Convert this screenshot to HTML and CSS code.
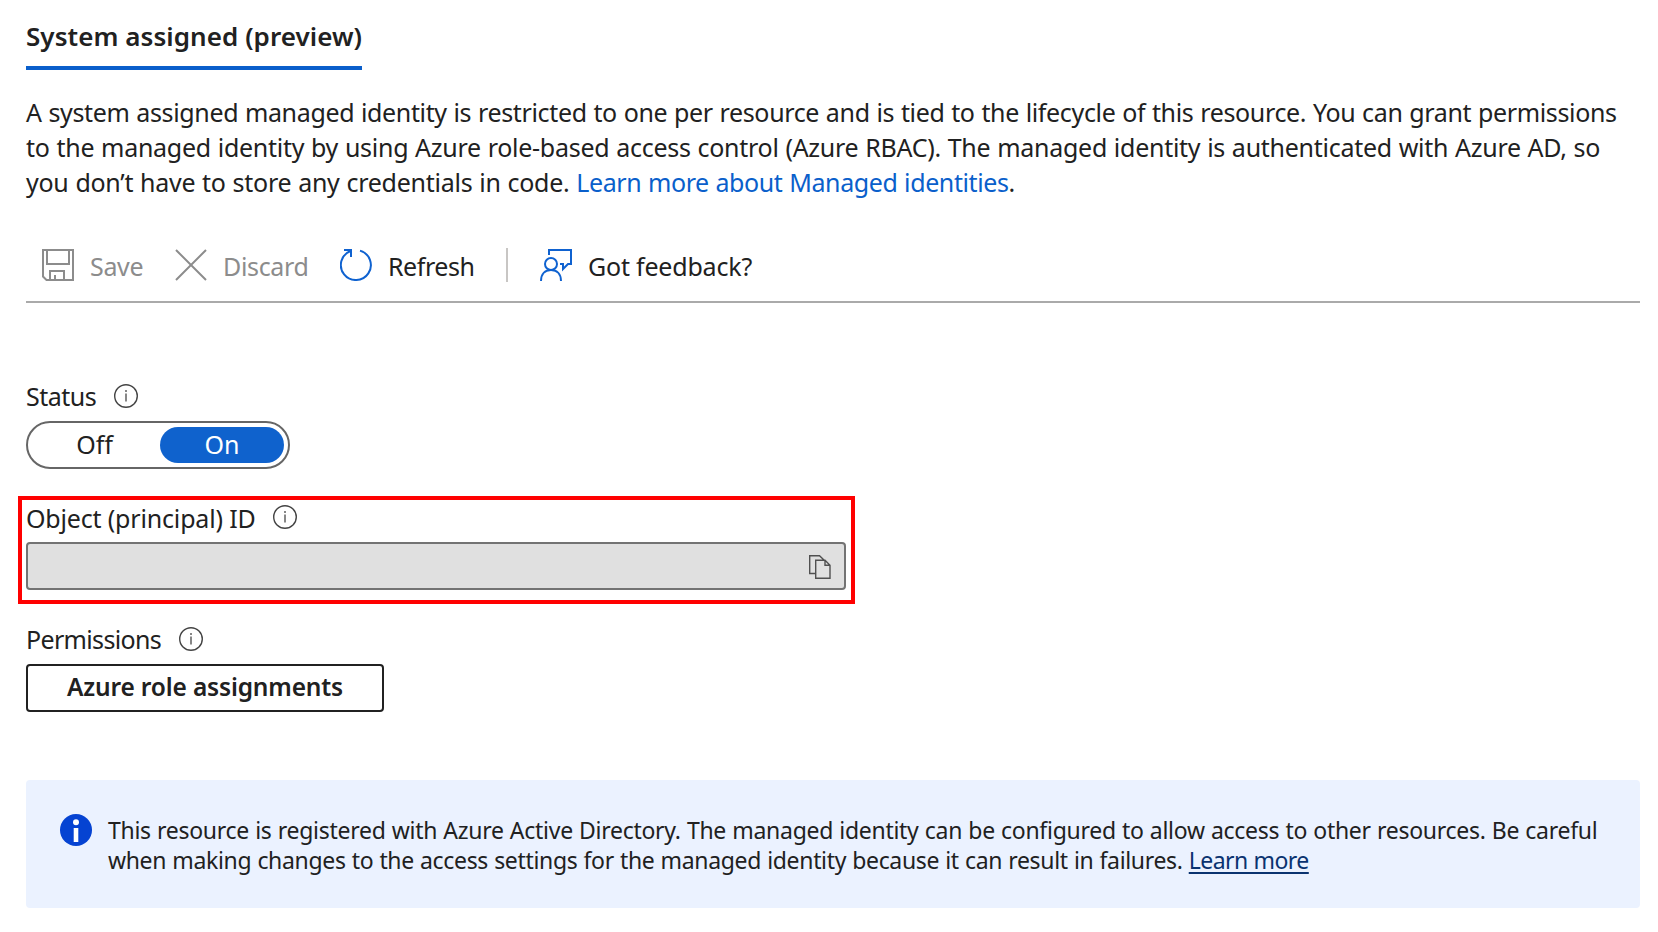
FILE: index.html
```html
<!DOCTYPE html>
<html lang="en">
<head>
<meta charset="utf-8">
<title>Identity</title>
<link rel="stylesheet" href="styles.css">
</head>
<body>
<main class="page">
  <h1 class="tab">System assigned (preview)</h1>
  <p class="intro">
    <span class="line l1">A system assigned managed identity is restricted to one per resource and is tied to the lifecycle of this resource. You can grant permissions</span>
    <span class="line l2">to the managed identity by using Azure role-based access control (Azure RBAC). The managed identity is authenticated with Azure AD, so</span>
    <span class="line l3">you don’t have to store any credentials in code. <a class="link" href="#">Learn more about Managed identities</a>.</span>
  </p>
  <div class="toolbar">
    <button class="tool save disabled">
      <svg width="32" height="32" viewBox="0 0 32 32" fill="none" stroke="#8c8c8c" stroke-width="2"><path d="M1 1H31V31H4.500L1 27.500ZM5 1V15H27V1M8 31V22H22V31M13 31V26"/></svg>
      <span>Save</span>
    </button>
    <button class="tool discard disabled">
      <svg width="32" height="32" viewBox="0 0 32 32" fill="none" stroke="#8c8c8c" stroke-width="2"><path d="M1 1L31 31M31 1L1 31"/></svg>
      <span>Discard</span>
    </button>
    <button class="tool refresh">
      <svg width="32" height="32" viewBox="0 0 32 32" fill="none" stroke="#0f62d0" stroke-width="2"><path d="M20 1.600A15 15 0 1 1 10.500 2M4 1H11V8"/></svg>
      <span>Refresh</span>
    </button>
    <span class="divider"></span>
    <button class="tool feedback">
      <svg width="32" height="32" viewBox="0 0 32 32" fill="none" stroke="#0f62d0" stroke-width="2"><path d="M9 6V1H31V15H28L23 20V15H20"/><circle cx="11" cy="15" r="6"/><path d="M1 32C1 25 5 21 11 21S21 25 21 32"/></svg>
      <span>Got feedback?</span>
    </button>
  </div>

  <section class="status">
    <div class="label"><span>Status</span>
      <svg class="info" width="24" height="24" viewBox="0 0 24 24"><circle cx="12" cy="12" r="11.300" fill="none" stroke="#444" stroke-width="1.400"/><path d="M12 9.500V17.500M12 6V8" stroke="#555" stroke-width="1.400"/></svg>
    </div>
    <div class="switch"><span class="off">Off</span><span class="on">On</span></div>
  </section>

  <section class="object">
    <div class="label"><span>Object (principal) ID</span>
      <svg class="info" width="24" height="24" viewBox="0 0 24 24"><circle cx="12" cy="12" r="11.300" fill="none" stroke="#444" stroke-width="1.400"/><path d="M12 9.500V17.500M12 6V8" stroke="#555" stroke-width="1.400"/></svg>
    </div>
    <div class="field">
      <svg width="22" height="24" viewBox="0 0 22 24" fill="none" stroke="#505050" stroke-width="1.400"><path d="M6 18.500H.7V.7H10.500L15 5M6.700 5.200H16L21 10.200V23.300H6.700ZM16 5.200V10.200H21"/></svg>
    </div>
  </section>

  <section class="permissions">
    <div class="label"><span>Permissions</span>
      <svg class="info" width="24" height="24" viewBox="0 0 24 24"><circle cx="12" cy="12" r="11.300" fill="none" stroke="#444" stroke-width="1.400"/><path d="M12 9.500V17.500M12 6V8" stroke="#555" stroke-width="1.400"/></svg>
    </div>
    <button class="roles">Azure role assignments</button>
  </section>

  <aside class="banner">
    <svg class="badge" width="32" height="32" viewBox="0 0 32 32"><circle cx="16" cy="16" r="16" fill="#0543d2"/><circle cx="16" cy="8.300" r="3" fill="#fff"/><path d="M13.700 14H18.300V28H13.700Z" fill="#fff"/></svg>
    <p class="note">
      <span class="line b1">This resource is registered with Azure Active Directory. The managed identity can be configured to allow access to other resources. Be careful</span>
      <span class="line b2">when making changes to the access settings for the managed identity because it can result in failures. <a class="more" href="#">Learn more</a></span>
    </p>
  </aside>
</main>
</body>
</html>
```

FILE: styles.css
```css
* { box-sizing: border-box; }
body {
  margin: 0;
  background: #fff;
  color: #212121;
  font: 25px/35px "Noto Sans", "Open Sans", sans-serif;
}
.page { padding: 20px 18px 24px 26px; }
.tab {
  width: 336px;
  margin: 0;
  padding-bottom: 14px;
  border-bottom: 4px solid #0a5fcb;
  font-size: 26px;
  line-height: 32px;
  font-weight: 600;
  letter-spacing: 0.06px;
  white-space: nowrap;
}
.intro { margin: 25px 0 0; word-spacing: 0.6px; }
.line { display: block; white-space: nowrap; }
.l1 { letter-spacing: -0.35px; }
.l2 { letter-spacing: -0.27px; }
.l3 { letter-spacing: -0.26px; }
.link { color: #0a5fcb; letter-spacing: -0.4px; text-decoration: none; }
.toolbar {
  display: flex;
  align-items: center;
  height: 74px;
  margin-top: 29px;
  padding-left: 16px;
  border-bottom: 2px solid #aaa;
}
.tool {
  display: flex;
  align-items: center;
  padding: 0;
  border: 0;
  background: none;
  color: #212121;
  font: inherit;
  white-space: nowrap;
}
.tool svg { flex: none; margin-right: 16px; }
.tool span { padding-top: 2px; }
.save { width: 133px; letter-spacing: -0.35px; }
.discard { width: 165px; letter-spacing: -0.33px; }
.refresh { width: 166px; letter-spacing: -0.45px; }
.feedback { letter-spacing: -0.2px; }
.disabled { color: #8c8c8c; }
.divider { width: 2px; height: 34px; margin-right: 32px; background: #c8c6c4; }
.label { display: flex; align-items: center; height: 32px; line-height: 32px; white-space: nowrap; }
.info { flex: none; }
.status { margin-top: 77px; }
.status .label > span { width: 88px; letter-spacing: -0.5px; }
.switch {
  display: flex;
  width: 264px;
  height: 48px;
  margin-top: 9px;
  padding: 4px;
  border: 2px solid #666;
  border-radius: 24px;
  line-height: 34px;
  text-align: center;
}
.off { width: 125px; margin-right: 3px; }
.on { width: 124px; border-radius: 18px; background: #0f62cd; color: #fff; }
.object {
  width: 837px;
  height: 108px;
  margin: 27px 0 0 -8px;
  padding: 2px 5px 10px 4px;
  border: 4px solid #f00;
}
.object .label > span { width: 247px; letter-spacing: -0.17px; }
.object .info { margin-top: -2px; }
.field {
  display: flex;
  align-items: center;
  justify-content: flex-end;
  height: 48px;
  margin-top: 8px;
  padding: 2px 13px 0 0;
  border: 2px solid #737373;
  border-radius: 4px;
  background: #e0e0e0;
}
.permissions { margin-top: 19px; }
.permissions .label > span { width: 153px; letter-spacing: -0.66px; }
.roles {
  display: block;
  width: 358px;
  height: 48px;
  margin-top: 9px;
  padding: 0 0 3px;
  border: 2px solid #212121;
  border-radius: 4px;
  background: #fff;
  color: #212121;
  font: 600 24.5px/40px "Noto Sans", "Open Sans", sans-serif;
  letter-spacing: -0.16px;
  white-space: nowrap;
}
.banner {
  display: flex;
  gap: 16px;
  height: 128px;
  margin-top: 68px;
  padding: 34px 0 0 34px;
  border-radius: 4px;
  background: #ebf2ff;
  font-size: 23px;
  line-height: 30px;
}
.badge { flex: none; }
.note { margin: 1px 0 0; word-spacing: 0.5px; }
.b1 { letter-spacing: -0.28px; }
.b2 { letter-spacing: -0.335px; }
.more {
  color: #0a3370;
  letter-spacing: -0.55px;
  text-decoration: underline;
  text-decoration-thickness: 2px;
  text-underline-offset: 3px;
}
```
